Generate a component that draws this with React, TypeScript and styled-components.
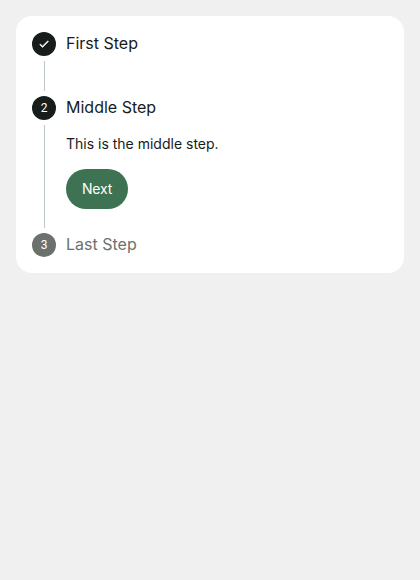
import React from "react";
import styled, { createGlobalStyle } from "styled-components";

const Global = createGlobalStyle`
  * { box-sizing: border-box; }
  body { margin: 0; background: #f0f0f0; font-family: Inter, sans-serif; }
`;

const Page = styled.main`
  padding: 16px;
`;

const Card = styled.section`
  height: 257px;
  padding: 16px;
  border-radius: 16px;
  background: #fff;
`;

const Step = styled.div<{ $height: number }>`
  display: flex;
  gap: 10px;
  height: ${(p) => p.$height}px;
`;

const Rail = styled.div`
  display: flex;
  flex-direction: column;
  align-items: center;
  width: 24px;
  flex: none;
`;

const Dot = styled.div<{ $muted?: boolean }>`
  display: flex;
  align-items: center;
  justify-content: center;
  width: 24px;
  height: 24px;
  flex: none;
  border-radius: 50%;
  background: ${(p) => (p.$muted ? "#6b716d" : "#161d1a")};
  color: #fff;
  font-family: Roboto, sans-serif;
  font-size: 12px;
  font-weight: 400;
`;

const Line = styled.div`
  flex: 1;
  width: 1px;
  margin: 5px 0 5px 1px;
  background: #c0c9c1;
`;

const Body = styled.div`
  display: flex;
  flex-direction: column;
  align-items: flex-start;
`;

const Title = styled.h2<{ $muted?: boolean }>`
  margin: 0;
  height: 24px;
  font-size: 16px;
  font-weight: 400;
  line-height: 22px;
  color: ${(p) => (p.$muted ? "#6b716d" : "#161d1a")};
`;

const Text = styled.p`
  margin: 14px 0 15px;
  font-size: 14px;
  line-height: 20px;
  color: #161d1a;
`;

const Button = styled.button`
  height: 40px;
  width: 62px;
  padding: 0;
  border: 0;
  border-radius: 20px;
  background: #3d7352;
  color: #fff;
  font: 400 14px/20px Inter, sans-serif;
  letter-spacing: -0.2px;
`;

export default function App() {
  return (
    <>
      <Global />
      <Page>
        <Card>
          <Step $height={64}>
            <Rail>
              <Dot>
                <svg width="12" height="12" viewBox="0 0 24 24" fill="#fff" stroke="#fff" strokeWidth="1">
                  <path d="M9 16.17 4.83 12l-1.42 1.41L9 19 21 7l-1.41-1.41z" />
                </svg>
              </Dot>
              <Line />
            </Rail>
            <Body>
              <Title>First Step</Title>
            </Body>
          </Step>
          <Step $height={137}>
            <Rail>
              <Dot>2</Dot>
              <Line />
            </Rail>
            <Body>
              <Title>Middle Step</Title>
              <Text>This is the middle step.</Text>
              <Button>Next</Button>
            </Body>
          </Step>
          <Step $height={24}>
            <Rail>
              <Dot $muted>3</Dot>
            </Rail>
            <Body>
              <Title $muted>Last Step</Title>
            </Body>
          </Step>
        </Card>
      </Page>
    </>
  );
}
